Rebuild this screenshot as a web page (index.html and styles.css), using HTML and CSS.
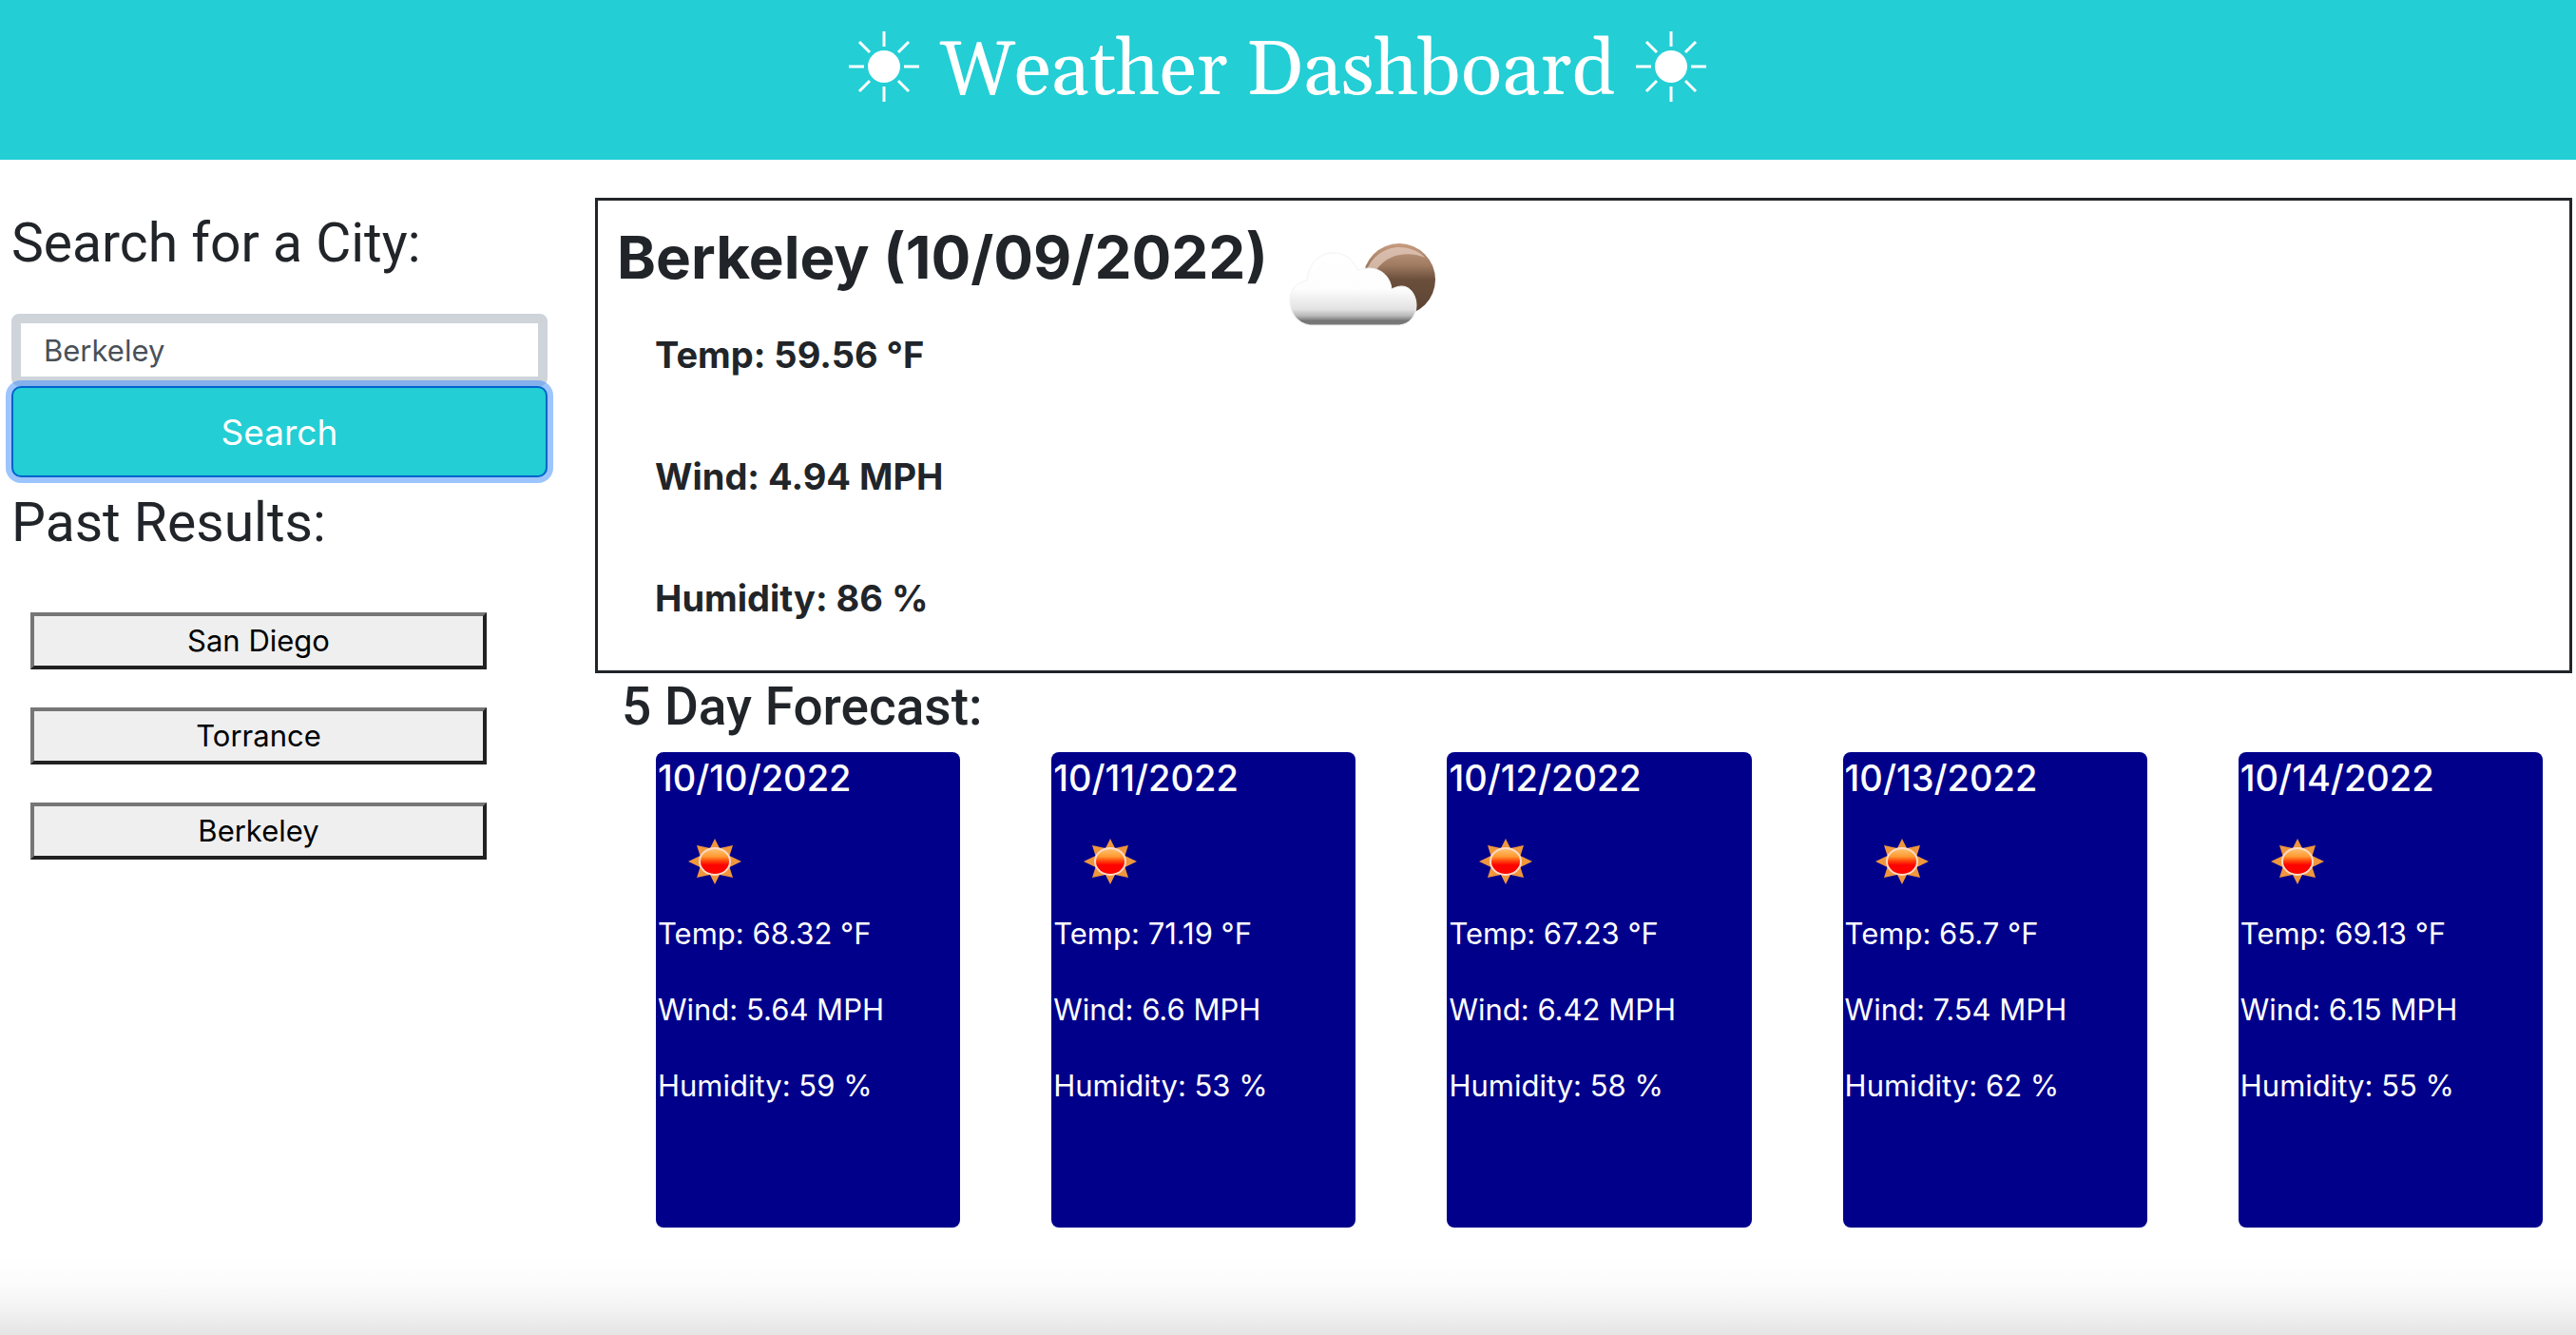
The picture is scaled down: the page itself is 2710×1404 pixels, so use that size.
FILE: index.html
```html
<!DOCTYPE html>
<html lang="en">
<head>
  <meta charset="utf-8">
  <meta name="viewport" content="width=device-width, initial-scale=1">
  <title>Weather Dashboard</title>
  <link rel="stylesheet" href="styles.css">
</head>
<body>
  <!-- Shared icon definitions -->
  <svg class="sprite" aria-hidden="true">
    <defs>
      <linearGradient id="disc" x1="0" y1="0" x2="0" y2="1">
        <stop offset="0" stop-color="#ffc070"/>
        <stop offset=".3" stop-color="#ff9a30"/>
        <stop offset=".5" stop-color="#ff3a08"/>
        <stop offset=".65" stop-color="#ff0000"/>
        <stop offset="1" stop-color="#fa0800"/>
      </linearGradient>
      <linearGradient id="moon" x1="0" y1="0" x2="0" y2="1">
        <stop offset="0" stop-color="#c79c80"/>
        <stop offset=".3" stop-color="#a07b62"/>
        <stop offset=".5" stop-color="#6b4f3c"/>
        <stop offset="1" stop-color="#594231"/>
      </linearGradient>
      <linearGradient id="cloud" x1="0" y1="0" x2="0" y2="1">
        <stop offset="0" stop-color="#ffffff"/>
        <stop offset=".5" stop-color="#fdfdfd"/>
        <stop offset=".78" stop-color="#e2e2e2"/>
        <stop offset=".87" stop-color="#b8b8b8"/>
        <stop offset=".94" stop-color="#757575"/>
        <stop offset="1" stop-color="#7c7c7c"/>
      </linearGradient>
      <symbol id="sun-outline" viewBox="0 0 76 76">
        <ellipse cx="38" cy="38" rx="17" ry="17" fill="#fff"/>
        <path d="M38 1v16M38 59v16M1 38h16M59 38h16M12 12l11 11M53 53l11 11M64 12L53 23M23 53L12 64" fill="none" stroke="#fff" stroke-width="3"/>
      </symbol>
      <symbol id="sun-clear" viewBox="0 0 56 48">
        <path d="M28 0L33 10L47 7L43.500 18L56 24L43.500 30L47 41L33 38L28 48L23 38L9 41L12.500 30L0 24L12.500 18L9 7L23 10Z" fill="#f0963c"/>
        <ellipse cx="28" cy="24" rx="17" ry="15" fill="#ffdcc8"/>
        <ellipse cx="28" cy="24" rx="15" ry="13" fill="url(#disc)"/>
      </symbol>
      <symbol id="partly-cloudy" viewBox="0 0 156 92">
        <circle cx="116" cy="43" r="38" fill="url(#moon)"/>
        <path d="M82 33C87 19 101 9 116 9C127 9 137 13 143 20C130 14 105 13 91 34Z" fill="#e3cbbd" opacity=".75"/>
        <path d="M22 91C9 89 1 78 1 65C1 54 8 46 19 44C20 28 31 15 46 15C59 15 67 21 72 33C76 32 80 31 84 31C98 31 107 41 108 53C112 51 115 50 119 50C128 50 134 60 134 70C134 81 127 90 116 91Z" fill="url(#cloud)" stroke="#f2f2f4" stroke-width="1"/>
      </symbol>
    </defs>
  </svg>

  <header class="site-header">
    <svg class="title-sun" aria-hidden="true"><use href="#sun-outline"/></svg>
    <h1 class="site-title">Weather Dashboard</h1>
    <svg class="title-sun" aria-hidden="true"><use href="#sun-outline"/></svg>
  </header>

  <main class="layout">
    <aside class="sidebar">
      <form class="search">
        <label class="side-heading" for="city">Search for a City:</label>
        <input class="search-input" id="city" type="text" value="Berkeley">
        <button class="search-button" type="button">Search</button>
      </form>
      <h2 class="side-heading past-heading">Past Results:</h2>
      <div class="history">
        <button class="history-button" type="button">San Diego</button>
        <button class="history-button" type="button">Torrance</button>
        <button class="history-button" type="button">Berkeley</button>
      </div>
    </aside>

    <div class="results">
      <section class="current">
        <div class="current-head">
          <h2 class="current-title">Berkeley (10/09/2022)</h2>
          <svg class="current-icon" role="img" aria-label="Partly cloudy"><use href="#partly-cloudy"/></svg>
        </div>
        <div class="current-stats">
          <p>Temp: 59.56 °F</p>
          <p>Wind: 4.94 MPH</p>
          <p>Humidity: 86 %</p>
        </div>
      </section>

      <h2 class="forecast-heading">5 Day Forecast:</h2>
      <section class="forecast">
        <article class="card">
          <h3 class="card-date">10/10/2022</h3>
          <svg class="card-icon" role="img" aria-label="Clear"><use href="#sun-clear"/></svg>
          <p>Temp: 68.32 °F</p>
          <p>Wind: 5.64 MPH</p>
          <p>Humidity: 59 %</p>
        </article>
        <article class="card">
          <h3 class="card-date">10/11/2022</h3>
          <svg class="card-icon" role="img" aria-label="Clear"><use href="#sun-clear"/></svg>
          <p>Temp: 71.19 °F</p>
          <p>Wind: 6.6 MPH</p>
          <p>Humidity: 53 %</p>
        </article>
        <article class="card">
          <h3 class="card-date">10/12/2022</h3>
          <svg class="card-icon" role="img" aria-label="Clear"><use href="#sun-clear"/></svg>
          <p>Temp: 67.23 °F</p>
          <p>Wind: 6.42 MPH</p>
          <p>Humidity: 58 %</p>
        </article>
        <article class="card">
          <h3 class="card-date">10/13/2022</h3>
          <svg class="card-icon" role="img" aria-label="Clear"><use href="#sun-clear"/></svg>
          <p>Temp: 65.7 °F</p>
          <p>Wind: 7.54 MPH</p>
          <p>Humidity: 62 %</p>
        </article>
        <article class="card">
          <h3 class="card-date">10/14/2022</h3>
          <svg class="card-icon" role="img" aria-label="Clear"><use href="#sun-clear"/></svg>
          <p>Temp: 69.13 °F</p>
          <p>Wind: 6.15 MPH</p>
          <p>Humidity: 55 %</p>
        </article>
      </section>
    </div>
  </main>
</body>
</html>
```
FILE: styles.css
```css
:root {
  --teal: #23ced5;
  --ink: #212529;
  --navy: #00008b;
}

* {
  box-sizing: border-box;
}

body {
  margin: 0;
  min-height: 100vh;
  color: var(--ink);
  font-family: Inter, "Liberation Sans", sans-serif;
  font-size: 31px;
  line-height: 40px;
  background: linear-gradient(to top, #e5e5e5, #f3f3f3 28px, #fbfbfb 52px, #ffffff 84px) #ffffff;
}

h1, h2, h3, p {
  margin: 0;
}

.sprite {
  display: block;
  width: 0;
  height: 0;
}

/* Header */
.site-header {
  display: flex;
  justify-content: center;
  gap: 21px;
  padding: 24px 22px 40px 0;
  background: var(--teal);
  color: #ffffff;
}

.site-title {
  font-family: Gelasio, Georgia, "Liberation Serif", serif;
  font-size: 80px;
  font-weight: 400;
  line-height: 104px;
}

.title-sun {
  width: 76px;
  height: 92px;
}

/* Page columns */
.layout {
  display: grid;
  grid-template-columns: 141fr 520fr;
  gap: 50px;
  padding: 40px 4px 40px 12px;
}

.sidebar {
  padding-top: 12px;
}

.search {
  display: flex;
  flex-direction: column;
}

.side-heading {
  font-family: Roboto, "Liberation Sans", sans-serif;
  font-size: 57px;
  font-weight: 400;
  line-height: 72px;
}

.search-input {
  width: 100%;
  height: 76px;
  margin-top: 38px;
  padding: 0 24px;
  border: 10px solid #ced4da;
  border-radius: 8px;
  background: #ffffff;
  color: #495057;
  font: inherit;
}

.search-button {
  position: relative;
  height: 96px;
  border: 2px solid #0062cc;
  border-radius: 10px;
  background: var(--teal);
  box-shadow: 0 0 0 6px rgba(58, 140, 253, .5);
  color: #ffffff;
  font-family: inherit;
  font-size: 37px;
}

.past-heading {
  margin-top: 12px;
}

.history {
  display: flex;
  flex-direction: column;
  gap: 40px;
  padding: 58px 64px 0 20px;
}

.history-button {
  height: 60px;
  border: 4px solid;
  border-color: #767676 #212121 #212121 #767676;
  background: #efefef;
  color: #000000;
  font: inherit;
}

/* Current conditions */
.current {
  padding: 20px 20px 52px;
  border: 3px solid var(--ink);
}

.current-head {
  display: flex;
  align-items: flex-start;
  gap: 22px;
}

.current-title {
  font-size: 62px;
  font-weight: 700;
  line-height: 80px;
}

.current-icon {
  width: 156px;
  height: 92px;
  margin-top: 20px;
}

.current-stats {
  display: flex;
  flex-direction: column;
  gap: 80px;
  margin-top: 6px;
  padding-left: 40px;
  font-size: 38px;
  font-weight: 700;
  line-height: 48px;
}

/* Forecast */
.forecast-heading {
  margin: 3px 0 16px;
  padding-left: 28px;
  font-family: Roboto, "Liberation Sans", sans-serif;
  font-size: 55px;
  font-weight: 500;
  line-height: 64px;
}

.forecast {
  display: grid;
  grid-template-columns: repeat(5, 1fr);
  gap: 96px;
  padding: 0 31px 0 64px;
}

.card {
  display: flex;
  flex-direction: column;
  gap: 40px;
  min-height: 500px;
  padding: 3px 2px;
  border-radius: 8px;
  background: var(--navy);
  color: #ffffff;
}

.card-date {
  font-size: 38px;
  font-weight: 500;
  line-height: 48px;
}

.card-icon {
  width: 56px;
  height: 48px;
  margin: 0 0 -8px 32px;
}
```
